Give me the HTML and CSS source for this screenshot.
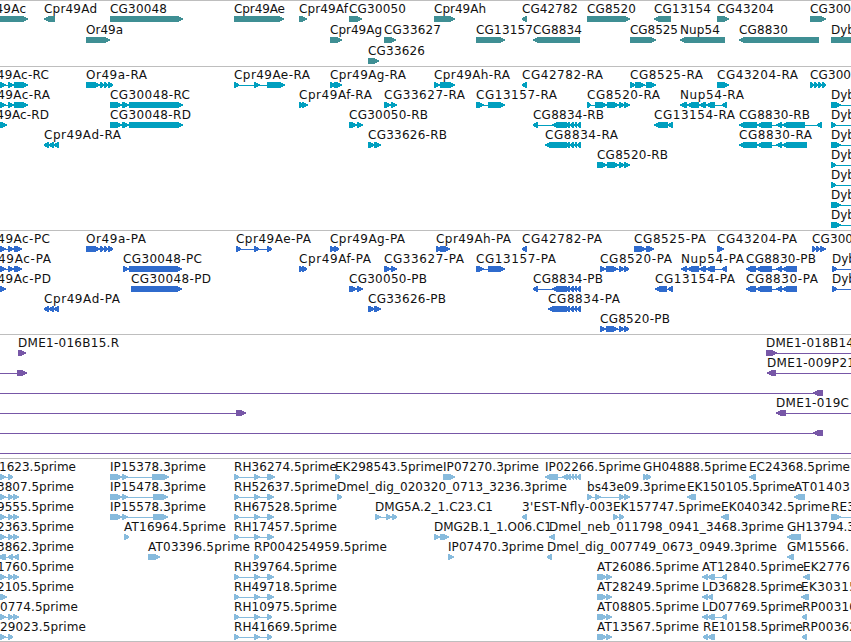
FILE: index.html
```
<!DOCTYPE html>
<html lang="en">
<head>
  <meta charset="UTF-8">
  <meta name="viewport" content="width=device-width, initial-scale=1.0">
  <title>Genome Browser</title>
  <link rel="stylesheet" href="styles.css">
</head>
<body>

<main class="browser">
  <section class="track genes" id="genes"></section>
  <section class="track transcripts" id="transcripts"></section>
  <section class="track proteins" id="proteins"></section>
  <section class="track clones" id="clones"></section>
  <section class="track ests" id="ests"></section>
</main>

<script>
// feature: label | text start | text end | strand | segments | intron line (optional)
// text end 0 keeps the natural width
const tracks = {
  genes: [
    [
      "Cpr49Ac|-26|26|+|-10-28", "Cpr49Ad|44|97|-|44-55", "CG30048|110|167|+|110-183",
      "Cpr49Ae|234|285|+|234-284", "Cpr49Af|299|348|+|299-307", "CG30050|349|406|+|349-362",
      "Cpr49Ah|434|486|+|434-455", "CG42782|522|578|-|522-527", "CG8520|587|636|+|587-630",
      "CG13154|654|711|-|654-671", "CG43204|717|774|+|717-729", "CG300|810|851|+|810-826"
    ],
    [
      "Or49a|86|123|+|86-110", "Cpr49Ag|330|382|+|330-342", "CG33627|384|441|+|384-396",
      "CG13157|476|533|+|476-505", "CG8834|533|582|-|533-580", "CG8525|630|678|+|630-656",
      "Nup54|680|720|-|680-725", "CG8830|739|788|-|739-819", "Dyb|831|0|+|831-870"
    ],
    ["CG33626|368|425|+|368-379"]
  ],
  transcripts: [
    [
      "Cpr49Ac-RC|-25|49|+|-2-6,8-14,14-28", "Or49a-RA|86|147|+|86-100,100-104,104-108,108-113",
      "Cpr49Ae-RA|234|310|+|234-239,254-260,267-285", "Cpr49Ag-RA|330|406|+|330-335,334-342",
      "Cpr49Ah-RA|434|510|+|434-440,440-455", "CG42782-RA|522|603|-|522-527",
      "CG8525-RA|630|703|+|630-635,635-645,646-656", "CG43204-RA|717|798|+|717-729",
      "CG300|810|851|+|810-814,814-818,818-822,822-826"
    ],
    [
      "Cpr49Ac-RA|-25|50|+|-2-6,8-14,14-28", "CG30048-RC|110|190|+|110-122,122-129,129-183",
      "Cpr49Af-RA|299|372|+|299-303,302-308", "CG33627-RA|384|465|+|384-391,391-397",
      "CG13157-RA|476|557|+|476-484,488-505", "CG8520-RA|587|660|+|587-591,595-607,607-619,619-624,624-630",
      "Nup54-RA|680|744|-|680-687,687-699,699-706,706-715,722-727", "Dyb|831|0|+|831-841|831-860"
    ],
    [
      "Cpr49Ac-RD|-25|49|+|-2-7", "CG30048-RD|110|191|+|110-122,122-129,129-183",
      "CG30050-RB|349|428|+|349-357,357-363", "CG8834-RB|533|604|-|533-538,552-567,566-570,570-574,574-577,577-581",
      "CG13154-RA|654|735|-|654-668,668-673", "CG8830-RB|739|810|-|739-757,757-772,776-782,782-805,817-822",
      "Dyb|831|0|+|831-836|831-860"
    ],
    [
      "Cpr49Ad-RA|44|121|-|44-49,48-54,54-59", "CG33626-RB|368|447|+|368-375,374-381",
      "CG8834-RA|545|618|-|545-567,566-570,570-574,574-577,577-581",
      "CG8830-RA|739|812|-|739-757,757-772,776-782,782-807", "Dyb|831|0|+|831-841|831-860"
    ],
    ["CG8520-RB|597|668|+|597-607,607-619,619-624,624-630", "Dyb|831|0|+|831-836|831-860"],
    ["Dyb|831|0|+|831-836|831-860"],
    ["Dyb|831|0|+|831-841|831-860"],
    ["Dyb|831|0|+|831-841|831-860"]
  ],
  proteins: [
    [
      "Cpr49Ac-PC|-25|50|+|-2-6,8-14,14-22", "Or49a-PA|86|146|+|86-100,100-104,104-108,108-113",
      "Cpr49Ae-PA|236|311|+|236-241,254-259,267-272", "Cpr49Ag-PA|330|405|+|330-335,334-339",
      "Cpr49Ah-PA|436|511|+|436-441,440-450", "CG42782-PA|522|602|-|522-527",
      "CG8525-PA|634|706|+|634-646,646-654", "CG43204-PA|717|797|+|717-724",
      "CG300|812|853|+|812-816,816-820,820-826"
    ],
    [
      "Cpr49Ac-PA|-25|51|+|-2-6,8-14,14-22", "CG30048-PC|123|202|+|123-129,129-182",
      "Cpr49Af-PA|299|371|+|299-303,302-307", "CG33627-PA|384|464|+|384-391,391-397",
      "CG13157-PA|476|556|+|476-484,488-505", "CG8520-PA|600|672|+|600-606,606-618,619-624,624-629",
      "Nup54-PA|681|744|-|681-687,687-699,699-706,706-715,722-727",
      "CG8830-PB|746|816|-|746-756,756-772,776-782,782-797", "Dyb|832|0|+|832-837|832-860"
    ],
    [
      "Cpr49Ac-PD|-25|51|+|-2-6", "CG30048-PD|131|211|+|131-182",
      "CG30050-PB|349|427|+|349-357,357-363", "CG8834-PB|533|603|-|533-538,552-567,566-570,570-574,574-577,577-581",
      "CG13154-PA|655|735|-|655-667,668-673", "CG8830-PA|746|818|-|746-756,756-772,776-782,782-797",
      "Dyb|832|0|+|832-837|832-860"
    ],
    [
      "Cpr49Ad-PA|44|120|-|44-49,48-54,54-59", "CG33626-PB|368|446|+|368-375,374-381",
      "CG8834-PA|548|620|-|548-567,566-570,570-574,574-577,577-581"
    ],
    ["CG8520-PB|600|670|+|600-606,606-618,619-624,624-629"]
  ],
  clones: [
    ["DME1-016B15.R|18|119|+|18-26", "DME1-018B14|766|854|+|766-777|766-860"],
    ["|0|0|+|17-27|0-20", "DME1-009P21|767|855|-|767-776|770-860"],
    ["|0|0|-|813-823|0-820"],
    ["|0|0|+|236-246|0-240", "DME1-019C|776|849|-|776-786|780-860"],
    ["|0|0|-|813-823|0-820"],
    ["|0|0|+||0-860"]
  ],
  ests: [
    [
      "1623.5prime|-1|76|+|-2-6,8-13", "IP15378.3prime|110|206|+|110-122,122-128,152-169",
      "RH36274.5prime|234|337|+|234-239,254-260,267-275", "EK298543.5prime|335|443|+|335-340",
      "IP07270.3prime|443|539|+|443-455", "IP02266.5prime|545|641|-|545-558,562-568,567-571,571-574,574-577,577-581",
      "GH04888.5prime|643|747|+|643-647,646-651", "EC24368.5prime|749|850|-|749-756"
    ],
    [
      "3807.5prime|-3|74|+|-2-6,8-13,13-19", "IP15478.3prime|110|206|+|110-122,122-128,153-168",
      "RH52637.5prime|234|337|+|234-239,254-260,267-274", "Dmel_dig_020320_0713_3236.3prime|337|567|+|337-342",
      "bs43e09.3prime|587|686|+|587-592,595-601,619-624,624-630", "EK150105.5prime|687|795|-|687-696",
      "AT01403|794|850|-|794-805"
    ],
    [
      "9555.5prime|-3|74|+|-2-6,8-13,13-19", "IP15578.3prime|110|206|+|110-122,122-128,153-168",
      "RH67528.5prime|234|337|+|234-239,254-260,267-274", "DMG5A.2_1.C23.C1|375|493|+|375-381,386-392,392-397",
      "3'EST-Nfly-003|522|613|-|522-527", "EK157747.5prime|613|721|+|613-618,619-624",
      "EK040342.5prime|721|830|-|721-729", "RE3|831|855|+|831-841|831-860"
    ],
    [
      "2363.5prime|-3|74|+|-2-6,8-13,13-19", "AT16964.5prime|124|226|+|124-129",
      "RH17457.5prime|234|337|+|234-239,254-260,267-274", "DMG2B.1_1.O06.C1|434|552|+|434-440,440-449",
      "Dmel_neb_011798_0941_3468.3prime|549|784|-|549-555", "GH13794.3|787|855|-|787-801"
    ],
    [
      "3862.3prime|-3|74|-|-2-6,8-13,13-19", "AT03396.5prime|148|250|+|148-160",
      "RP004254959.5prime|254|387|+|254-259", "IP07470.3prime|448|544|+|448-454",
      "Dmel_dig_007749_0673_0949.3prime|547|777|-|547-552", "GM15566.|787|849|-|787-794"
    ],
    [
      "1760.5prime|-3|74|+|-2-6,8-13,13-19", "RH39764.5prime|234|337|+|234-239,254-260,267-274",
      "AT26086.5prime|597|699|+|597-607,606-612", "AT12840.5prime|702|804|-|702-708,707-715,722-727",
      "EK2776|803|850|-|803-810"
    ],
    [
      "2105.5prime|-3|74|+|-2-7", "RH49718.5prime|234|337|+|234-239,254-260,267-274",
      "AT28249.5prime|597|699|+|597-607,606-612", "LD36828.5prime|702|803|-|702-708,707-713",
      "EK30315|801|857|-|801-809"
    ],
    [
      "0774.5prime|0|78|+|-2-6,8-13,13-19", "RH10975.5prime|234|337|+|234-239,254-260,267-272",
      "AT08805.5prime|597|699|+|597-607,606-612", "LD07769.5prime|702|803|-|702-708,707-715,722-727",
      "RP00310|802|857|-|802-807"
    ],
    [
      "29023.5prime|0|86|+|-2-6,8-13", "RH41669.5prime|234|337|+|234-239,254-260,267-272",
      "AT13567.5prime|597|699|+|597-607,606-612", "RE10158.5prime|703|803|-|703-708,707-715",
      "RP00362|802|857|-|802-807"
    ]
  ]
};

const SVG_NS = "http://www.w3.org/2000/svg";
const BASELINE = 10;
const BAR_TOP = 13;

function add(parent, name, attrs) {
  const el = document.createElementNS(SVG_NS, name);
  for (const key in attrs) el.setAttribute(key, attrs[key]);
  parent.appendChild(el);
  return el;
}

function parseRange(s) {
  const m = s.match(/^(-?\d+)-(\d+)$/);
  return [Number(m[1]), Number(m[2])];
}

// bar with a blunt pointed head on the side of the strand
function barPath(x1, x2, strand) {
  const head = Math.min(5, x2 - x1 - 1);
  const dir = strand === "+" ? 1 : -1;
  const tip = strand === "+" ? x2 : x1;
  const tail = strand === "+" ? x1 : x2;
  const neck = tip - dir * head;
  const mid = tip - dir * head * 0.4;
  return `M${tail} ${BAR_TOP}H${neck}L${mid} ${BAR_TOP + 1.2}L${tip} ${BAR_TOP + 2.6}` +
    `V${BAR_TOP + 3.6}L${mid} ${BAR_TOP + 4.8}L${neck} ${BAR_TOP + 6}H${tail}Z`;
}

function drawFeature(svg, line) {
  const [label, x, end, strand, segs, intron] = line.split("|");
  const ranges = segs ? segs.split(",").map(parseRange) : [];
  const g = add(svg, "g", { class: "feature" });
  const span = intron ? parseRange(intron) : [ranges[0][0] + 1, ranges[ranges.length - 1][1] - 1];
  add(g, "rect", { x: span[0], y: BAR_TOP + 3, width: span[1] - span[0], height: 1 });
  ranges.forEach(([a, b]) => add(g, "path", { d: barPath(a, b, strand) }));
  if (!label) return;
  const text = add(svg, "text", { x: x, y: BASELINE });
  if (Number(end)) text.setAttribute("textLength", end - x);
  text.textContent = label;
}

for (const id in tracks) {
  const track = document.getElementById(id);
  tracks[id].forEach(features => {
    const svg = add(track, "svg", { class: "row" });
    features.forEach(f => drawFeature(svg, f));
  });
}
</script>

</body>
</html>
```
FILE: styles.css
```
:root {
  --line: #bebebe;
  --text-color: #111;
}

* {
  box-sizing: border-box;
}

body {
  margin: 0;
  background-color: #fff;
  color: var(--text-color);
  font-family: "DejaVu Sans", sans-serif;
  font-size: 12px;
}

.browser {
  width: 851px;
  height: 642px;
  overflow: hidden;
  border-bottom: 1px solid var(--line);
}

.track {
  border-top: 1px solid var(--line);
  padding: 2px 0 1px;
}

.row {
  display: block;
  width: 100%;
  height: 20px;
}

.row text {
  fill: var(--text-color);
}

.genes {
  padding-bottom: 0;
  color: #3f8f94;
}

.genes .row {
  height: 21px;
}

.transcripts {
  color: #009fbf;
}

.proteins {
  color: #2f6bcd;
}

.clones {
  color: #7757a7;
}

.ests {
  padding-bottom: 0;
  color: #87bbdd;
}

.feature {
  fill: currentColor;
  shape-rendering: crispEdges;
}
```
